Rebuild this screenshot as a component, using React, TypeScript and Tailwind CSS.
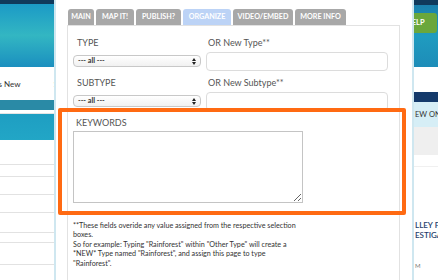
import * as React from 'react';

const tabs = [
  { label: 'MAIN', w: 'w-[26px]' },
  { label: 'MAP IT!', w: 'w-[38px]' },
  { label: 'PUBLISH?', w: 'w-[45px]' },
  { label: 'ORGANIZE', w: 'w-[48px]', active: true },
  { label: 'VIDEO/EMBED', w: 'w-[60px]' },
  { label: 'MORE INFO', w: 'w-[51px]' },
];

const FakeSelect = ({ mt }: { mt: string }) => (
  <div
    className={`${mt} h-[12px] w-[128px] rounded-[4px] border border-[#c8c8c8] bg-gradient-to-b from-white to-[#f1f1f1] flex items-center justify-between pl-[4px] pr-[4px]`}
  >
    <span className="text-[7.2px] font-bold text-[#333] leading-none">--- all ---</span>
    <svg width="4" height="7" viewBox="0 0 4 7">
      <path d="M0 3 L2 0 L4 3 Z" fill="#222" />
      <path d="M0 4 L2 7 L4 4 Z" fill="#222" />
    </svg>
  </div>
);

const LeftBg = () => (
  <div className="w-[54px] shrink-0 flex flex-col overflow-hidden">
    <div className="h-[4px] bg-[#103a5c]" />
    <div className="h-[63px] bg-gradient-to-b from-[#1b9ac6] via-[#33b6c2] to-[#1b8fbf]" />
    <div className="h-[33px] bg-white flex items-center justify-between text-[8px] text-[#333] whitespace-nowrap">
      <span className="-ml-[3px]">'s New</span>
      <span className="mr-[-4px]">S</span>
    </div>
    <div className="h-[10px] bg-[#2a8aa6]" />
    <div className="h-[4px] bg-white border-b border-[#e4e4e4]" />
    <div className="h-[26px] bg-gradient-to-b from-[#1e9ec2] to-[#22a6c6]" />
    <div className="flex-1 bg-white flex flex-col">
      <div className="h-[25px] border-b border-[#e2e2e2]" />
      <div className="h-[12px] border-b border-[#e2e2e2]" />
      <div className="h-[18px] border-b border-[#e2e2e2]" />
      <div className="h-[18px] border-b border-[#e2e2e2]" />
      <div className="h-[20px] border-b border-[#e2e2e2]" />
      <div className="h-[10px] border-b border-[#e2e2e2]" />
      <div className="h-[22px] border-b border-[#e2e2e2]" />
    </div>
  </div>
);

const RightBg = () => (
  <div className="w-[24px] shrink-0 flex flex-col overflow-hidden">
    <div className="h-[5px] bg-[#103a5c]" />
    <div className="h-[62px] bg-gradient-to-b from-[#1a80ad] via-[#1f9cc0] to-[#1d8cb8] flex justify-end pt-[8px] pr-[1px]">
      <div className="shrink-0 w-[36px] h-[20px] rounded-[3px] bg-[#6aa73c] flex items-center pl-[5px] text-[7.5px] font-bold text-white">
        HELP
      </div>
    </div>
    <div className="h-[25px] bg-white" />
    <div className="h-[10px] bg-[#143a6b]" />
    <div className="h-[25px] bg-[#d6eef6] flex items-center whitespace-nowrap text-[7.5px] text-[#333]">
      <span className="shrink-0 pl-[1px]">EW ONLINE</span>
    </div>
    <div className="h-[28px] bg-[#efefef]" />
    <div className="h-[12px] bg-white border-b border-[#f0f0f0]" />
    <div className="flex-1 bg-white flex flex-col pt-[53px] pl-[1px] text-[8px] leading-[10px] text-[#1e3d6c] font-semibold whitespace-nowrap">
      <span>LLEY FIRE</span>
      <span>ESTIGATION</span>
      <span className="mt-[21px] text-[6px] text-[#777] font-normal">M</span>
    </div>
  </div>
);

export default function App() {
  return (
    <div className="relative w-[438px] h-[280px] overflow-hidden flex bg-white font-['Lato','Open_Sans',sans-serif]">
      <LeftBg />

      <div className="w-[360px] shrink-0 bg-white border-l-[2px] border-r-[2px] border-[#cfe7f0] pt-[9px] pl-[11px] pr-[12px]">
        <div className="flex gap-[2px] ml-[1px] h-[16px]">
          {tabs.map((t) => (
            <div
              key={t.label}
              className={`${t.w} h-[16px] rounded-t-[3px] flex items-center justify-center text-[7.2px] font-bold text-white whitespace-nowrap ${
                t.active ? 'bg-[#bcd3f6]' : 'bg-[#a8a8a8]'
              }`}
            >
              {t.label}
            </div>
          ))}
        </div>

        <div className="h-[260px] border border-[#e2e2e2] pt-[10px] pl-[5px]">
          <div className="flex gap-[5px]">
            <div className="flex flex-col w-[128px]">
              <div className="h-[14px] leading-[14px] pl-[4px] text-[9px] text-[#555]">TYPE</div>
              <FakeSelect mt="mt-[5px]" />
            </div>
            <div className="flex flex-col w-[182px]">
              <div className="h-[14px] leading-[14px] pl-[2px] text-[9px] text-[#555]">OR New Type**</div>
              <div className="mt-[2px] h-[19px] rounded-[4px] border border-[#dcdcdc] bg-white" />
            </div>
          </div>

          <div className="flex gap-[5px] mt-[5px]">
            <div className="flex flex-col w-[128px]">
              <div className="h-[14px] leading-[14px] pl-[4px] text-[9px] text-[#555]">SUBTYPE</div>
              <FakeSelect mt="mt-[5px]" />
            </div>
            <div className="flex flex-col w-[182px]">
              <div className="h-[14px] leading-[14px] pl-[2px] text-[9px] text-[#555]">OR New Subtype**</div>
              <div className="mt-[2px] h-[19px] rounded-[4px] border border-[#dcdcdc] bg-white" />
            </div>
          </div>

          <div className="mt-[5px] h-[14px] leading-[14px] pl-[3px] text-[9px] text-[#555]">KEYWORDS</div>
          <textarea
            readOnly
            className="mt-[1px] block w-[230px] h-[72px] border border-[#c4c4c4] bg-white outline-none"
          />

          <div className="mt-[18px] text-[7.2px] leading-[9.4px] text-[#333] whitespace-nowrap">
            <div>**These fields overide any value assigned from the respective selection</div>
            <div>boxes.</div>
            <div>So for example: Typing "Rainforest" within "Other Type" will create a</div>
            <div>*NEW* Type named "Rainforest", and assign this page to type</div>
            <div>"Rainforest".</div>
          </div>
        </div>
      </div>

      <RightBg />

      <div className="absolute left-[58px] top-[108px] w-[348px] h-[107px] border-[4px] border-[#ff6a12] rounded-[2px] pointer-events-none" />
    </div>
  );
}
